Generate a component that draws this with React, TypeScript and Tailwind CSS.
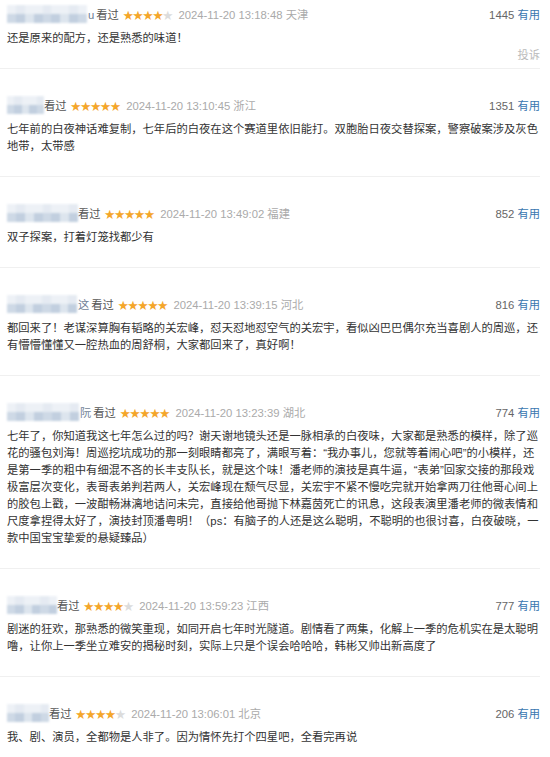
import { Fragment } from "react";

type Review = {
  nameWidth: number;
  nameTail?: string;
  rating: number;
  time: string;
  place: string;
  votes: number;
  text: string;
};

const reviews: Review[] = [
  {
    nameWidth: 80,
    nameTail: "u",
    rating: 4,
    time: "2024-11-20 13:18:48",
    place: "天津",
    votes: 1445,
    text: "还是原来的配方，还是熟悉的味道！",
  },
  {
    nameWidth: 37,
    rating: 5,
    time: "2024-11-20 13:10:45",
    place: "浙江",
    votes: 1351,
    text: "七年前的白夜神话难复制，七年后的白夜在这个赛道里依旧能打。双胞胎日夜交替探案，警察破案涉及灰色地带，太带感",
  },
  {
    nameWidth: 71,
    rating: 5,
    time: "2024-11-20 13:49:02",
    place: "福建",
    votes: 852,
    text: "双子探案，打着灯笼找都少有",
  },
  {
    nameWidth: 70,
    nameTail: "这",
    rating: 5,
    time: "2024-11-20 13:39:15",
    place: "河北",
    votes: 816,
    text: "都回来了！老谋深算胸有韬略的关宏峰，怼天怼地怼空气的关宏宇，看似凶巴巴偶尔充当喜剧人的周巡，还有懵懵懂懂又一腔热血的周舒桐，大家都回来了，真好啊！",
  },
  {
    nameWidth: 72,
    nameTail: "阮",
    rating: 5,
    time: "2024-11-20 13:23:39",
    place: "湖北",
    votes: 774,
    text: "七年了，你知道我这七年怎么过的吗？谢天谢地镜头还是一脉相承的白夜味，大家都是熟悉的模样，除了巡花的骚包刘海！周巡挖坑成功的那一刻眼睛都亮了，满眼写着：“我办事儿，您就等着闹心吧”的小模样，还是第一季的粗中有细混不吝的长丰支队长，就是这个味！潘老师的演技是真牛逼，“表弟”回家交接的那段戏极富层次变化，表哥表弟判若两人，关宏峰现在颓气尽显，关宏宇不紧不慢吃完就开始拿两刀往他哥心间上的胶包上戳，一波酣畅淋漓地诘问未完，直接给他哥抛下林嘉茵死亡的讯息，这段表演里潘老师的微表情和尺度拿捏得太好了，演技封顶潘粤明！（ps：有脑子的人还是这么聪明，不聪明的也很讨喜，白夜破晓，一款中国宝宝挚爱的悬疑臻品）",
  },
  {
    nameWidth: 50,
    rating: 4,
    time: "2024-11-20 13:59:23",
    place: "江西",
    votes: 777,
    text: "剧迷的狂欢，那熟悉的微笑重现，如同开启七年时光隧道。剧情看了两集，化解上一季的危机实在是太聪明噜，让你上一季坐立难安的揭秘时刻，实际上只是个误会哈哈哈，韩彬又帅出新高度了",
  },
  {
    nameWidth: 42,
    rating: 4,
    time: "2024-11-20 13:06:01",
    place: "北京",
    votes: 206,
    text: "我、剧、演员，全都物是人非了。因为情怀先打个四星吧，全看完再说",
  },
];

// 打码的用户名
const BlurName = ({ width }: { width: number }) => {
  const blocks = Math.ceil(width / 9);
  return (
    <div className="flex flex-col h-[20px] blur-[1.2px] opacity-80" style={{ width }}>
      <div className="flex h-[9px]">
        {Array.from({ length: blocks }).map((_, i) => (
          <div
            key={i}
            className={`h-full w-[9px] ${i % 3 === 1 ? "bg-[#dfe6ef]" : "bg-[#e9eef4]"}`}
          />
        ))}
      </div>
      <div className="flex h-[9px]">
        {Array.from({ length: blocks }).map((_, i) => (
          <div
            key={i}
            className={`h-full w-[9px] ${i % 4 === 2 ? "bg-[#d5dfea]" : i % 2 ? "bg-[#b3c4d8]" : "bg-[#c2d0e0]"}`}
          />
        ))}
      </div>
    </div>
  );
};

const Stars = ({ rating }: { rating: number }) => (
  <span className="flex text-[10.5px] leading-none tracking-[-0.6px]">
    {[0, 1, 2, 3, 4].map((i) => (
      <span key={i} className={i < rating ? "text-[#f4a62a]" : "text-[#dcdcdc]"}>
        ★
      </span>
    ))}
  </span>
);

const App = () => {
  return (
    <div className="w-[550px] min-h-[757px] bg-white pt-[5px] font-['Liberation_Sans','Noto_Sans_CJK_SC',sans-serif]">
      <div className="w-[540px]">
        {reviews.map((r, idx) => (
          <Fragment key={idx}>
            <div className={`border-b border-[#f0f0f0] pl-[7px] pb-[4px] ${idx === 0 ? "" : "pt-[27px]"}`}>
              {/* 头部 */}
              <div className="flex items-center h-[20px] text-[11.3px]">
                <div className="flex items-center">
                  <BlurName width={r.nameWidth} />
                  {r.nameTail && <span className="text-[#6f7f96] ml-[1px] mr-[2px]">{r.nameTail}</span>}
                </div>
                <span className="text-[#555] mr-[4px]">看过</span>
                <Stars rating={r.rating} />
                <span className="ml-[6px] text-[#aaa]">
                  {r.time} {r.place}
                </span>
                <span className="ml-auto text-[#666]">
                  {r.votes} <span className="text-[#3a77b0]">有用</span>
                </span>
              </div>

              {/* 内容 */}
              <p className="mt-[5px] text-[11.3px] leading-[17px] text-[#333] break-all">{r.text}</p>

              {/* 投诉 */}
              <div className={`h-[17px] text-right text-[11.3px] leading-[17px] ${idx === 0 ? "text-[#bbb]" : "text-transparent"}`}>
                投诉
              </div>
            </div>
          </Fragment>
        ))}
      </div>
    </div>
  );
};

export default App;
